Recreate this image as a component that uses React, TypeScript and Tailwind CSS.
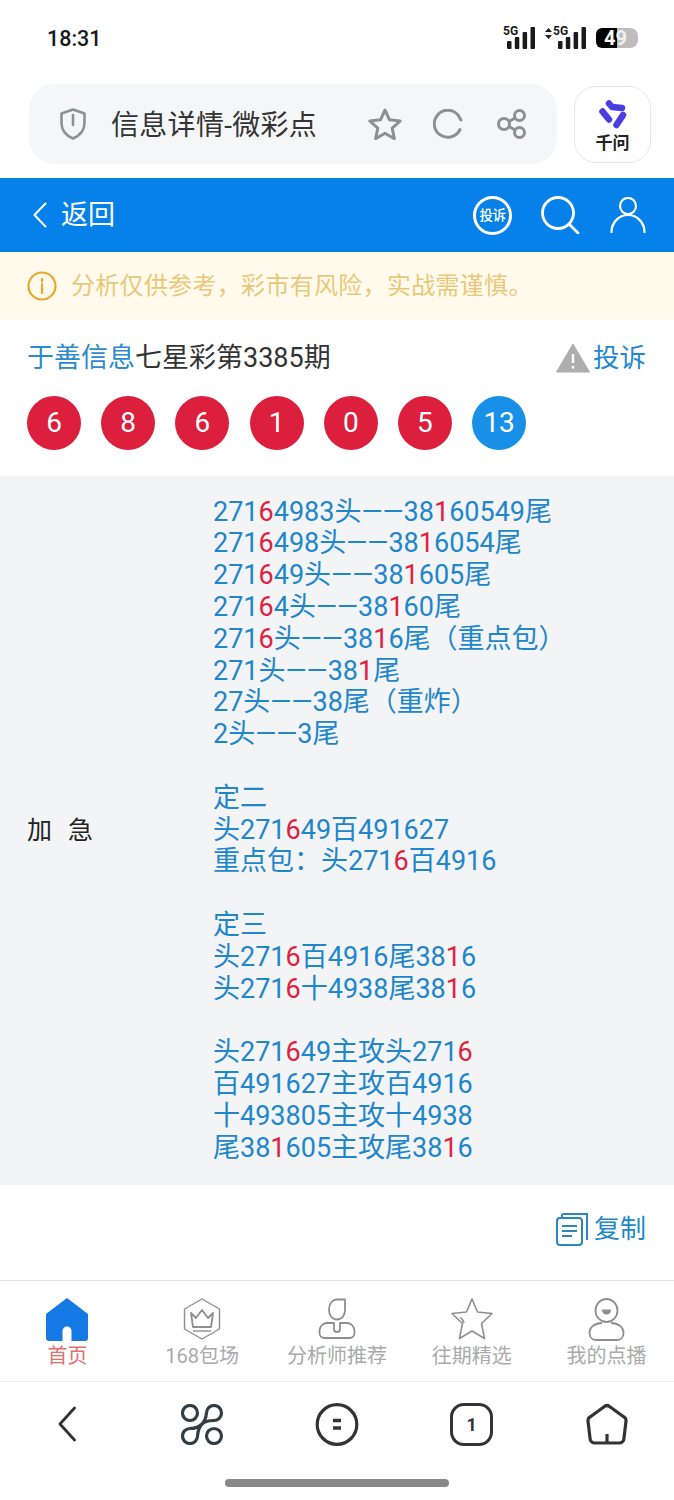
const lines = [
  "271[6]4983头——38[1]60549尾",
  "271[6]498头——38[1]6054尾",
  "271[6]49头——38[1]605尾",
  "271[6]4头——38[1]60尾",
  "271[6]头——38[1]6尾（重点包）",
  "271头——38[1]尾",
  "27头——38尾（重炸）",
  "2头——3尾",
  "",
  "定二",
  "头271[6]49百491627",
  "重点包：头271[6]百4916",
  "",
  "定三",
  "头271[6]百4916尾38[1]6",
  "头271[6]十4938尾38[1]6",
  "",
  "头271[6]49主攻头271[6]",
  "百491627主攻百4916",
  "十493805主攻十4938",
  "尾38[1]605主攻尾38[1]6",
];

const balls = ["6", "8", "6", "1", "0", "5"];

// [6] marks a digit that hit, shown in red
const Line = ({ text }: { text: string }) => (
  <div className="h-[31.8px] whitespace-pre">
    {text.split(/(\[\d\])/).map((part, i) =>
      part.startsWith("[") ? (
        <span key={i} className="text-[#e0213f]">{part[1]}</span>
      ) : (
        <span key={i}>{part}</span>
      )
    )}
  </div>
);

const Ball = ({ n, blue }: { n: string; blue?: boolean }) => (
  <div className={`flex h-[54px] w-[54px] items-center justify-center rounded-full text-[28px] text-white ${blue ? "bg-[#1890e8]" : "bg-[#dc1f3c]"}`}>
    {n}
  </div>
);

const Signal = () => (
  <svg width="28" height="22" viewBox="0 0 28 22" fill="#1a1a1a">
    <rect x="0" y="14" width="4.500" height="8" rx="1" />
    <rect x="7.800" y="10" width="4.500" height="12" rx="1" />
    <rect x="15.600" y="5" width="4.500" height="17" rx="1" />
    <rect x="23.500" y="0" width="4.500" height="22" rx="1" />
  </svg>
);

const StatusBar = () => (
  <div className="flex h-[84px] items-start justify-between pl-[47px] pr-[36px] pt-[25px]">
    <span className="text-[21.500px] font-medium leading-[28px] text-[#1a1a1a]">18:31</span>
    <div className="flex items-center pt-[2px]">
      <div className="relative h-[22px] w-[32px]">
        <span className="absolute left-0 top-[-3px] text-[12px] font-bold leading-[14px] text-[#1a1a1a]">5G</span>
        <div className="absolute left-[4px] top-0"><Signal /></div>
      </div>
      <div className="relative ml-[10px] h-[22px] w-[40px]">
        <svg className="absolute left-0 top-[1px]" width="7" height="11" viewBox="0 0 7 11" fill="#1a1a1a">
          <path d="M3.500 0 7 4H0zM3.500 11 0 7h7z" />
        </svg>
        <span className="absolute left-[8px] top-[-3px] text-[12px] font-bold leading-[14px] text-[#1a1a1a]">5G</span>
        <div className="absolute left-[13px] top-0"><Signal /></div>
      </div>
      <div className="relative ml-[11px] flex h-[20px] w-[42px]">
        <div className="w-[21px] rounded-l-[6px] bg-black" />
        <div className="w-[21px] rounded-r-[8px] bg-[#bdbdbd]" />
        <div className="absolute left-[8px] top-0 flex h-[20px] items-center text-[20px] font-bold leading-[20px]">
          <span className="text-white">4</span>
          <span className="text-[#f0f0f0]">9</span>
        </div>
      </div>
    </div>
  </div>
);

const BrowserBar = () => (
  <div className="flex h-[94px] items-start pl-[29px] pr-[23px]">
    <div className="flex h-[80px] w-[528px] items-center rounded-[26px] bg-[#f5f6f7] pl-[31px]">
      <svg width="26" height="32" viewBox="0 0 26 32" fill="none" stroke="#8a9093" strokeWidth="2.600">
        <path d="M13 1.500 24.500 5.500V15c0 7.500-4.500 12.500-11.500 15.500C6 27.500 1.500 22.500 1.500 15V5.500Z" strokeLinejoin="round" />
        <path d="M13 7v10" strokeLinecap="round" />
      </svg>
      <span className="ml-[25px] mt-[4px] w-[257px] text-[28px] tracking-[0.3px] text-[#333]">信息详情-微彩点</span>
      <svg width="34" height="32" viewBox="0 0 34 32" fill="none" stroke="#8a9093" strokeWidth="3" strokeLinejoin="round">
        <path d="M17 2l4.500 9.800 10.700 1.200-8 7.200 2.200 10.500L17 25.300 7.600 30.700l2.200-10.500-8-7.200 10.700-1.200Z" />
      </svg>
      <svg className="ml-[31px]" width="30" height="30" viewBox="0 0 30 30" fill="none" stroke="#8a9093" strokeWidth="3" strokeLinecap="round">
        <path d="M27 20.500A13.500 13.500 0 1 1 25 6l3 5" />
      </svg>
      <svg className="ml-[34px]" width="30" height="30" viewBox="0 0 30 30" fill="none" stroke="#8a9093" strokeWidth="3">
        <circle cx="7" cy="15" r="5.500" />
        <circle cx="22.500" cy="6.500" r="5" />
        <circle cx="22.500" cy="23.500" r="5" />
        <path d="M12 12.500 18 9M12 17.500l6 3.500" />
      </svg>
    </div>
    <div className="ml-[17px] mt-[2px] flex h-[77px] w-[77px] flex-col items-center rounded-[22px] border border-[#e6e6e6] pt-[12px]">
      <svg width="30" height="30" viewBox="0 0 30 30" fill="none" stroke="#4a3de0" strokeWidth="6.500" strokeLinecap="round" strokeLinejoin="round">
        <path d="M11 4.500 14 8l10 1" />
        <path d="M4.500 12.500 11 20.500" />
        <path d="M25 16 18.500 26" />
      </svg>
      <span className="mt-[4px] text-[17px] font-bold leading-[20px] text-[#222]">千问</span>
    </div>
  </div>
);

const BlueBar = () => (
  <div className="flex h-[74px] items-center bg-[#0681ea] pl-[33px] pr-[28px] text-white">
    <svg width="14" height="26" viewBox="0 0 14 26" fill="none" stroke="white" strokeWidth="2" strokeLinecap="round" strokeLinejoin="round">
      <path d="M12.500 1.500 1.500 13l11 11.500" />
    </svg>
    <span className="ml-[14px] text-[27px]">返回</span>
    <div className="ml-auto flex h-[39px] w-[39px] items-center justify-center rounded-full border-[3px] border-white text-[13.500px] font-medium tracking-[-0.5px]">
      投诉
    </div>
    <svg className="ml-[29px]" width="39" height="38" viewBox="0 0 39 38" fill="none" stroke="white" strokeWidth="2.800" strokeLinecap="round">
      <circle cx="17" cy="17" r="15.500" />
      <path d="M28 28l9 9" />
    </svg>
    <svg className="ml-[30px]" width="36" height="36" viewBox="0 0 36 36" fill="none" stroke="white" strokeWidth="2.200" strokeLinecap="round">
      <circle cx="18" cy="9" r="8" />
      <path d="M1.500 35c0-9 7-17 16.500-17s16.500 8 16.500 17" />
    </svg>
  </div>
);

const Notice = () => (
  <div className="flex h-[68px] items-center bg-[#fffaeb] pl-[27px]">
    <svg width="30" height="30" viewBox="0 0 30 30" fill="none" stroke="#e8a92e" strokeWidth="2.200">
      <circle cx="15" cy="15" r="13.500" />
      <path d="M15 13v9M15 8v2.500" strokeLinecap="round" />
    </svg>
    <span className="ml-[14px] text-[24px] tracking-[0.3px] text-[#e8c878]">分析仅供参考，彩市有风险，实战需谨慎。</span>
  </div>
);

const Heading = () => (
  <div className="h-[156px] pl-[27px] pr-[28px] pt-[20px]">
    <div className="flex h-[36px] items-center">
      <span className="text-[27px] text-[#2b8ccc]">于善信息</span>
      <span className="text-[27px] text-[#333]">七星彩第3385期</span>
      <svg className="ml-auto" width="34" height="30" viewBox="0 0 34 30">
        <path d="M17 1 33.500 29H.5Z" fill="#aeaeae" stroke="#aeaeae" strokeLinejoin="round" />
        <path d="M17 11v9M17 23v2.500" stroke="white" strokeWidth="2.400" />
      </svg>
      <span className="ml-[3px] text-[26.500px] text-[#1f88d0]">投诉</span>
    </div>
    <div className="mt-[20px] flex gap-[20.200px]">
      {balls.map((n, i) => <Ball key={i} n={n} />)}
      <Ball n="13" blue />
    </div>
  </div>
);

const Detail = () => (
  <div className="flex h-[709px] items-center bg-[#f3f4f5]">
    <div className="w-[213px] pl-[27px] text-[25px] tracking-[16px] text-[#222]">加急</div>
    <div className="text-[27px] leading-[31.800px] text-[#2086cc]">
      {lines.map((l, i) => <Line key={i} text={l} />)}
    </div>
  </div>
);

const CopyRow = () => (
  <div className="flex h-[95px] items-center justify-end pb-[6px] pr-[28px]">
    <svg width="32" height="33" viewBox="0 0 32 33" fill="none" stroke="#2a86bd" strokeWidth="2">
      <path d="M6 4V2.500A1.500 1.500 0 0 1 7.500 1H31v26" />
      <rect x="1" y="5" width="25" height="27" rx="3" />
      <path d="M6 13h15M6 18h15M6 23h10" />
    </svg>
    <span className="ml-[6px] text-[26px] text-[#1e88c8]">复制</span>
  </div>
);

const tabs = [
  {
    label: "首页",
    active: true,
    icon: (
      <svg width="42" height="43" viewBox="0 0 42 43">
        <path d="M21 0 42 16V40a3 3 0 0 1-3 3H3a3 3 0 0 1-3-3V16Z" fill="#1479e4" />
        <path d="M16.500 43V33a4.500 4.500 0 0 1 9 0V43Z" fill="white" />
      </svg>
    ),
  },
  {
    label: "168包场",
    icon: (
      <svg width="38" height="42" viewBox="0 0 38 42" fill="none" stroke="#8e8e8e" strokeWidth="1.400" strokeLinejoin="round">
        <path d="M19 1 36.500 11V31L19 41 1.500 31V11Z" />
        <path d="M8 15l5 5 6-8 6 8 5-5-2 14H10Z" strokeWidth="1.800" />
        <path d="M10 33h18" />
      </svg>
    ),
  },
  {
    label: "分析师推荐",
    icon: (
      <svg width="38" height="42" viewBox="0 0 38 42" fill="none" stroke="#8e8e8e" strokeWidth="1.800" strokeLinejoin="round">
        <path d="M19 1.500h8v10c0 6-3 10-8 10s-8-4-8-10 3.500-10 8-10Z" />
        <path d="M16 25H9c-4.500 0-7.500 4-7.500 8v2a5 5 0 0 0 5 5h25a5 5 0 0 0 5-5v-2c0-4-3-8-7.500-8H22v6a3 3 0 0 1-6 0Z" />
      </svg>
    ),
  },
  {
    label: "往期精选",
    icon: (
      <svg width="42" height="42" viewBox="0 0 42 42" fill="none" stroke="#8e8e8e" strokeWidth="1.600" strokeLinejoin="round">
        <path d="M21 1l5.500 13 14.500 1.500-10.500 10 3 15L21 33 8.500 40.500l3-15L1 15.500 15.500 14Z" />
        <path d="M9 20c1 0 3 2 4 5" />
      </svg>
    ),
  },
  {
    label: "我的点播",
    icon: (
      <svg width="37" height="43" viewBox="0 0 37 43" fill="none" stroke="#8e8e8e" strokeWidth="1.800">
        <ellipse cx="18.500" cy="12.500" rx="11" ry="11.500" />
        <path d="M14 11.500h9c0 3-2 5-4.500 5S14 14.500 14 11.500Z" fill="#8e8e8e" stroke="none" />
        <path d="M14 25c-7 0-12.500 4-12.500 10 0 4.500 3 7 6.500 7h21c3.500 0 6.500-2.500 6.500-7 0-6-5.500-10-12.500-10" />
      </svg>
    ),
  },
];

const TabBar = () => (
  <div className="flex h-[101px] border-t border-[#e5e5e5]">
    {tabs.map((t) => (
      <div key={t.label} className="flex flex-1 flex-col items-center pt-[16px]">
        <div className="flex h-[44px] items-center">{t.icon}</div>
        <span className={`mt-[1px] whitespace-nowrap text-[20px] leading-[28px] ${t.active ? "text-[#e0706f]" : "text-[#aaaaaa]"}`}>
          {t.label}
        </span>
      </div>
    ))}
  </div>
);

const navIcons = [
  <svg key="back" width="18" height="36" viewBox="0 0 18 36" fill="none" stroke="#333" strokeWidth="2.800" strokeLinecap="round" strokeLinejoin="round">
    <path d="M16.500 2 2 18l14.500 16" />
  </svg>,
  <svg key="menu" width="43" height="41" viewBox="0 0 43 41" fill="none" stroke="#333e44" strokeWidth="3.200" strokeLinejoin="round">
    <circle cx="9" cy="9" r="7.500" />
    <circle cx="33" cy="32" r="7.500" />
    <path d="M21 20C24 17 25 14 25.500 9A7.500 7.500 0 1 1 33 16.500C28 16.500 24 17 21 20C18 23 17 27 16.500 32A7.500 7.500 0 1 1 9 24.500C14 24.500 18 23 21 20Z" />
  </svg>,
  <svg key="tabs" width="44" height="43" viewBox="0 0 44 43" fill="none" stroke="#333" strokeWidth="3.200">
    <circle cx="22" cy="21.500" r="19.800" />
    <path d="M18 17.500h8M18 25h8" strokeWidth="3.600" />
  </svg>,
  <div key="count" className="flex h-[43px] w-[43px] items-center justify-center rounded-[14px] border-[3px] border-[#333] text-[18px] font-bold text-[#333]">
    1
  </div>,
  <svg key="home" width="44" height="42" viewBox="0 0 44 42" fill="none" stroke="#333" strokeWidth="3.200" strokeLinejoin="round">
    <path d="M19.500 3.500a4 4 0 0 1 5 0L39 14a4 4 0 0 1 2 4l-2 17a5 5 0 0 1-5 5H10a5 5 0 0 1-5-5L3 18a4 4 0 0 1 2-4Z" />
    <path d="M22 31v9" />
  </svg>,
];

const NavBar = () => (
  <div className="h-[119px] border-t border-[#eeeeee]">
    <div className="flex h-[84px] items-center">
      {navIcons.map((icon, i) => (
        <div key={i} className="flex flex-1 justify-center">{icon}</div>
      ))}
    </div>
    <div className="mx-auto mt-[13px] h-[8px] w-[224px] rounded-full bg-[#888888]" />
  </div>
);

export default function App() {
  return (
    <div className="h-[1500px] w-[674px] overflow-hidden bg-white font-['Roboto','Noto_Sans_CJK_SC',sans-serif]">
      <StatusBar />
      <BrowserBar />
      <BlueBar />
      <Notice />
      <Heading />
      <Detail />
      <CopyRow />
      <TabBar />
      <NavBar />
    </div>
  );
}
